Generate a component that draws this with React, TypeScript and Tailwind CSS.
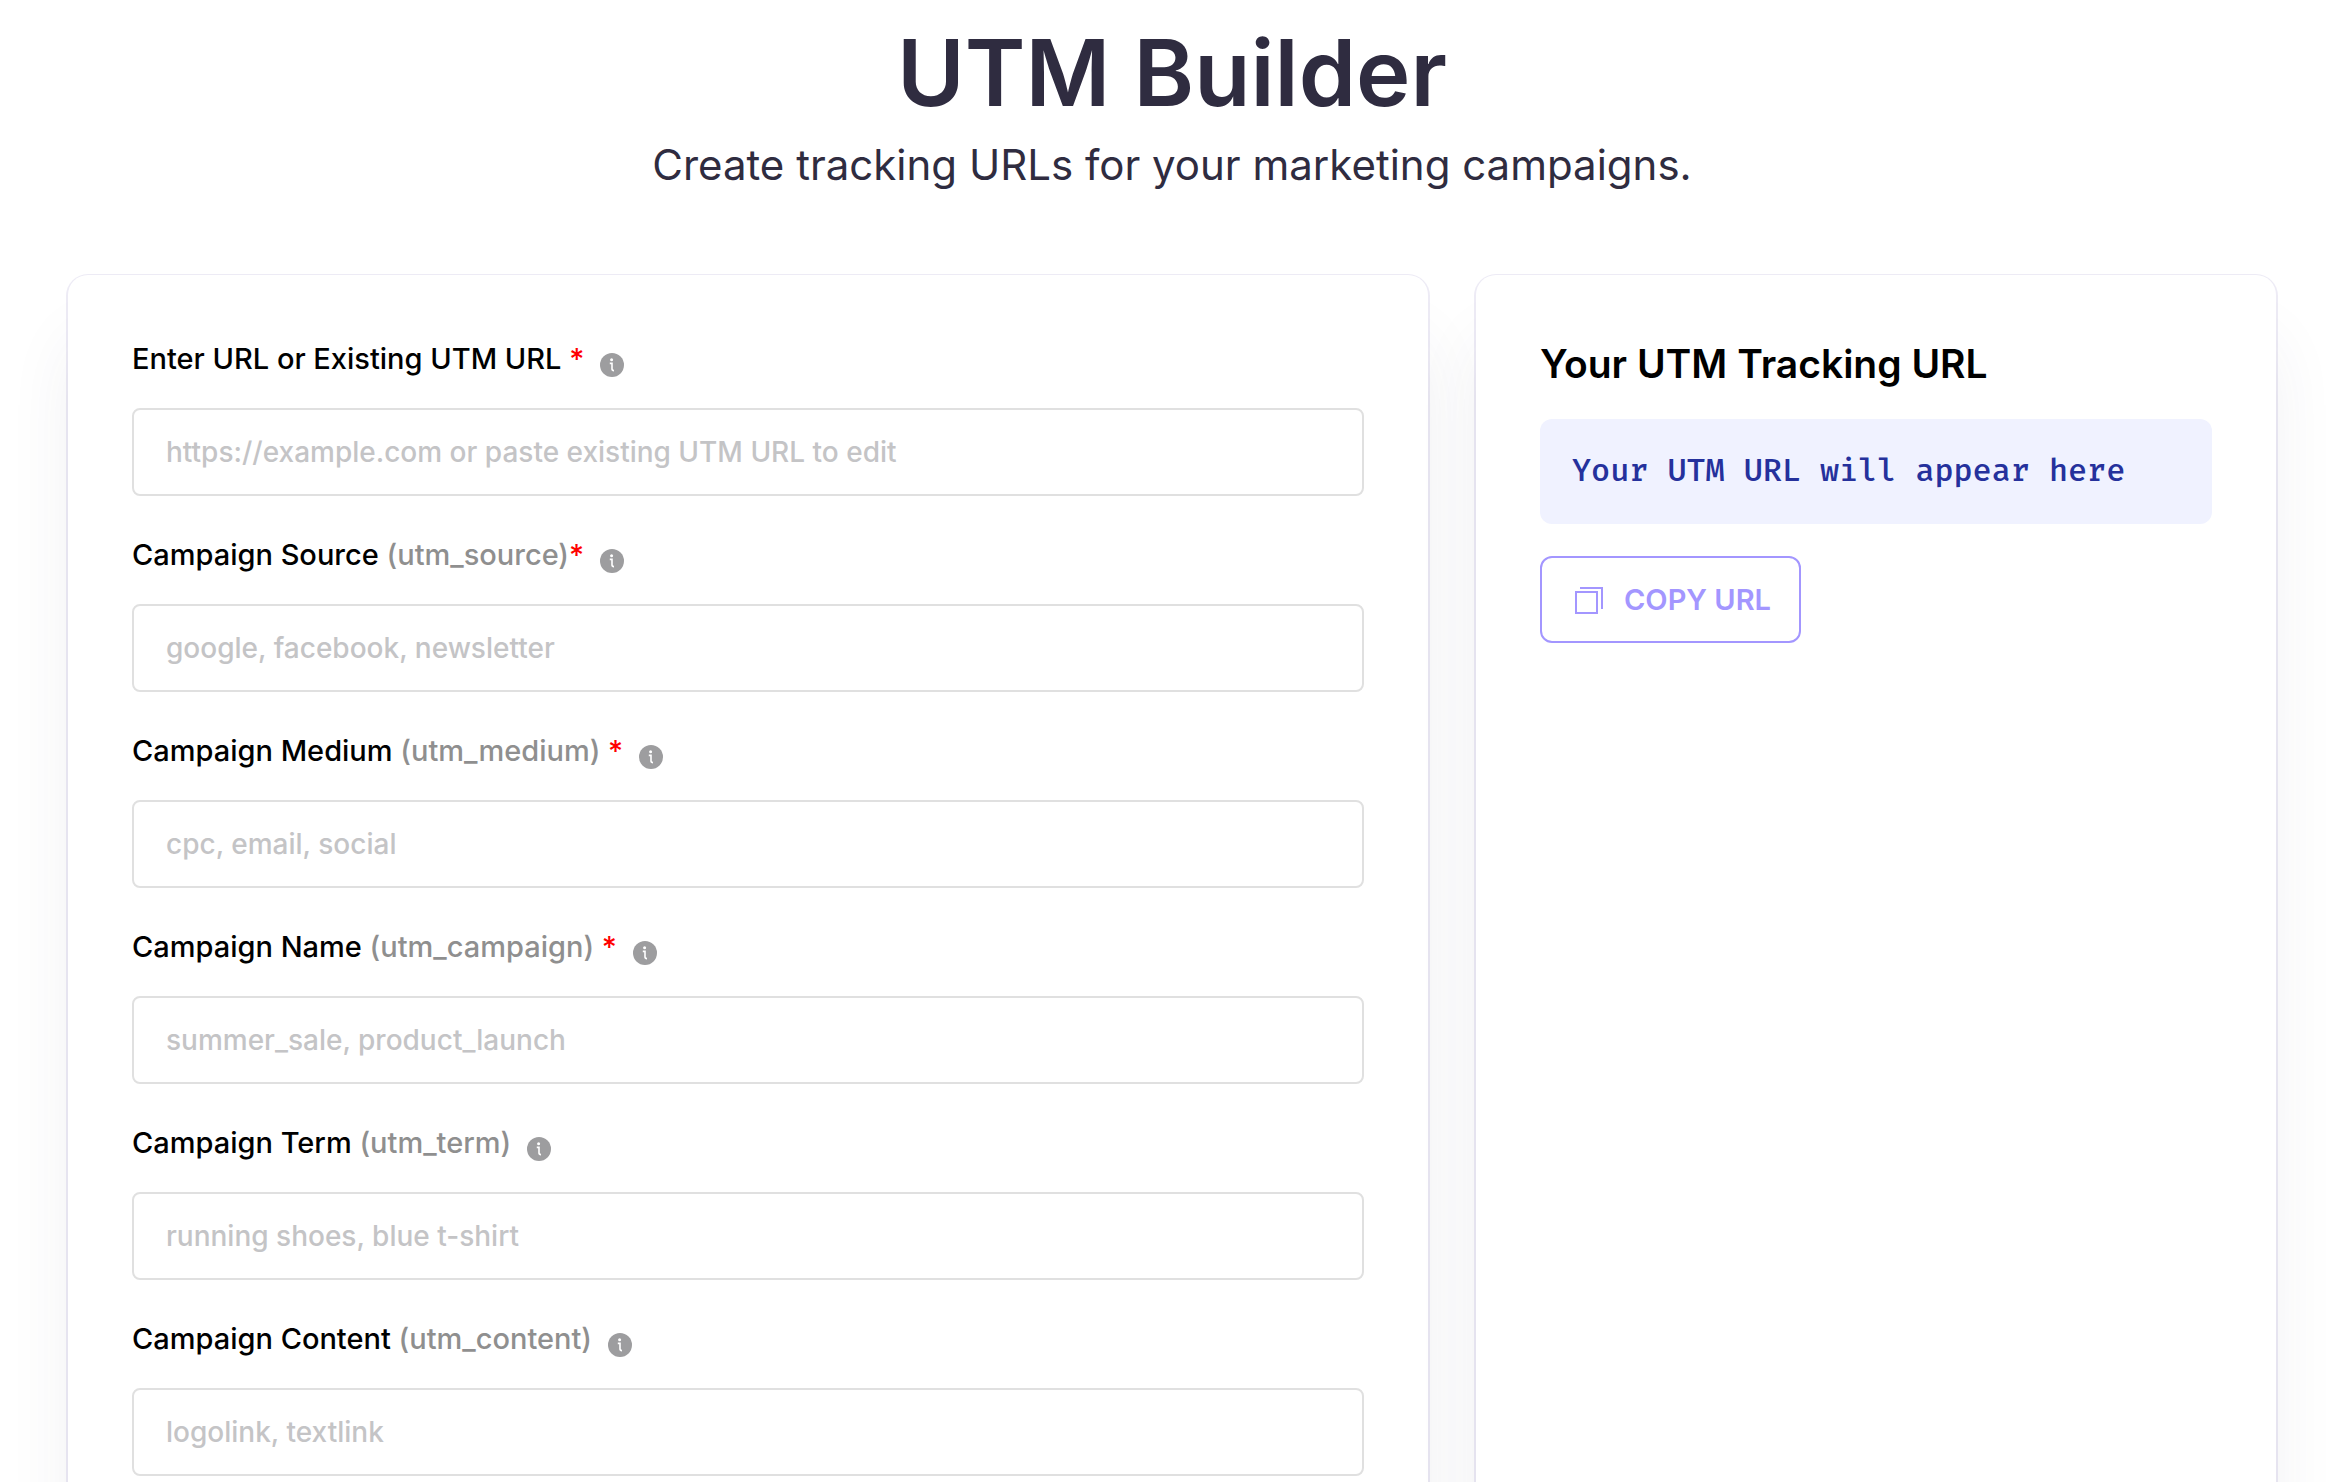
import { useState } from 'react';

type Field = {
  id: string;
  label: string;
  param?: string;
  required?: boolean;
  tight?: boolean;
  placeholder: string;
};

const fields: Field[] = [
  {
    id: 'url',
    label: 'Enter URL or Existing UTM URL',
    required: true,
    placeholder: 'https://example.com or paste existing UTM URL to edit',
  },
  {
    id: 'utm_source',
    label: 'Campaign Source',
    param: '(utm_source)',
    required: true,
    tight: true,
    placeholder: 'google, facebook, newsletter',
  },
  {
    id: 'utm_medium',
    label: 'Campaign Medium',
    param: '(utm_medium)',
    required: true,
    placeholder: 'cpc, email, social',
  },
  {
    id: 'utm_campaign',
    label: 'Campaign Name',
    param: '(utm_campaign)',
    required: true,
    placeholder: 'summer_sale, product_launch',
  },
  {
    id: 'utm_term',
    label: 'Campaign Term',
    param: '(utm_term)',
    placeholder: 'running shoes, blue t-shirt',
  },
  {
    id: 'utm_content',
    label: 'Campaign Content',
    param: '(utm_content)',
    placeholder: 'logolink, textlink',
  },
];

function InfoIcon() {
  return (
    <svg viewBox="0 0 24 24" className="h-6 w-6" aria-hidden="true">
      <circle cx="12" cy="12" r="12" fill="#9d9d9f" />
      <circle cx="11.6" cy="6.8" r="1.5" fill="#fff" />
      <path d="M9.8 10.4h2.2v5.6q0 1.6 2 1.6" fill="none" stroke="#fff" strokeWidth="1.6" />
    </svg>
  );
}

function CopyIcon() {
  return (
    <svg viewBox="0 0 30 30" className="h-[30px] w-[30px]" fill="none" stroke="currentColor" aria-hidden="true">
      <path d="M2 7h21v21H2zM6 3h22v21" strokeWidth="2" />
    </svg>
  );
}

function FormField({ field }: { field: Field }) {
  const [value, setValue] = useState('');
  return (
    <div>
      <div className="flex h-10 items-center text-[29px] leading-10 font-medium">
        <label htmlFor={field.id} className="whitespace-pre text-black">
          {field.label}
          {field.param && <span className="text-[#8f8f8f]"> {field.param}</span>}
          {field.required && <span className="text-[#ff0000]">{field.tight ? '*' : ' *'}</span>}
        </label>
        <button type="button" aria-label={`About ${field.label}`} className="mt-3 ml-4">
          <InfoIcon />
        </button>
      </div>
      <input
        id={field.id}
        value={value}
        onChange={(e) => setValue(e.target.value)}
        placeholder={field.placeholder}
        className="mt-[29px] block h-22 w-full rounded-lg border-2 border-[#e0e0e0] bg-white px-8 text-[28px] font-medium text-black outline-none placeholder:text-[#c4c4c6]"
      />
    </div>
  );
}

const card =
  'rounded-[20px] bg-white p-16 shadow-[0_1px_0_2px_rgba(80,60,160,0.1),0_60px_72px_-10px_rgba(50,50,93,0.09)]';

export default function App() {
  return (
    <main className="h-screen overflow-hidden bg-white pr-[50px] pl-[68px] font-['Inter',sans-serif]">
      <header className="pt-[17px] text-center text-[#2f2c40]">
        <h1 className="text-[92px] leading-[112px] font-semibold">UTM Builder</h1>
        <p className="mt-2 text-[42px] leading-[56px]">Create tracking URLs for your marketing campaigns.</p>
      </header>
      <div className="mt-[82px] grid grid-cols-[17fr_10fr] gap-12">
        <form className={card}>
          <div className="flex flex-col gap-[39px]">
            {fields.map((field) => (
              <FormField key={field.id} field={field} />
            ))}
          </div>
        </form>
        <section className={card}>
          <h2 className="text-[39px] leading-[50px] font-semibold text-black">Your UTM Tracking URL</h2>
          <output className="mt-[30px] block rounded-xl bg-[#f0f2ff] p-8 font-['Fira_Code','DejaVu_Sans_Mono',monospace] text-[31px] leading-[41px] font-medium text-[#25319c]">
            Your UTM URL will appear here
          </output>
          <button
            type="button"
            className="mt-8 flex h-[87px] items-center gap-5 rounded-xl border-2 border-[#a396ff] pr-7 pl-8 text-[29px] font-semibold text-[#a396ff]"
          >
            <CopyIcon />
            COPY URL
          </button>
        </section>
      </div>
    </main>
  );
}
